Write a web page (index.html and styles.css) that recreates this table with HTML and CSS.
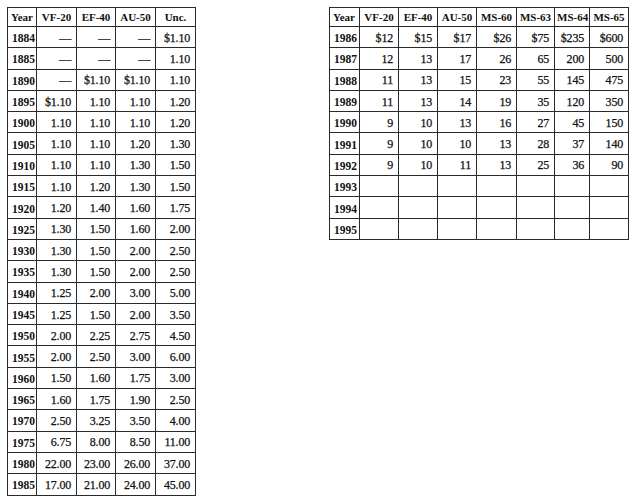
FILE: index.html
```html
<!DOCTYPE html>
<html>
<head>
<meta charset="utf-8">
<link rel="stylesheet" href="styles.css">
</head>
<body>
<div class="page">
  <table class="grid left">
    <colgroup>
      <col class="c-year"><col class="c-a"><col class="c-b"><col class="c-c"><col class="c-d">
    </colgroup>
    <thead>
      <tr><th class="yh">Year</th><th>VF-20</th><th>EF-40</th><th>AU-50</th><th>Unc.</th></tr>
    </thead>
    <tbody>
      <tr><th>1884</th><td>—</td><td>—</td><td>—</td><td>$1.10</td></tr>
      <tr><th>1885</th><td>—</td><td>—</td><td>—</td><td>1.10</td></tr>
      <tr><th>1890</th><td>—</td><td>$1.10</td><td>$1.10</td><td>1.10</td></tr>
      <tr><th>1895</th><td>$1.10</td><td>1.10</td><td>1.10</td><td>1.20</td></tr>
      <tr><th>1900</th><td>1.10</td><td>1.10</td><td>1.10</td><td>1.20</td></tr>
      <tr><th>1905</th><td>1.10</td><td>1.10</td><td>1.20</td><td>1.30</td></tr>
      <tr><th>1910</th><td>1.10</td><td>1.10</td><td>1.30</td><td>1.50</td></tr>
      <tr><th>1915</th><td>1.10</td><td>1.20</td><td>1.30</td><td>1.50</td></tr>
      <tr><th>1920</th><td>1.20</td><td>1.40</td><td>1.60</td><td>1.75</td></tr>
      <tr><th>1925</th><td>1.30</td><td>1.50</td><td>1.60</td><td>2.00</td></tr>
      <tr><th>1930</th><td>1.30</td><td>1.50</td><td>2.00</td><td>2.50</td></tr>
      <tr><th>1935</th><td>1.30</td><td>1.50</td><td>2.00</td><td>2.50</td></tr>
      <tr><th>1940</th><td>1.25</td><td>2.00</td><td>3.00</td><td>5.00</td></tr>
      <tr><th>1945</th><td>1.25</td><td>1.50</td><td>2.00</td><td>3.50</td></tr>
      <tr><th>1950</th><td>2.00</td><td>2.25</td><td>2.75</td><td>4.50</td></tr>
      <tr><th>1955</th><td>2.00</td><td>2.50</td><td>3.00</td><td>6.00</td></tr>
      <tr><th>1960</th><td>1.50</td><td>1.60</td><td>1.75</td><td>3.00</td></tr>
      <tr><th>1965</th><td>1.60</td><td>1.75</td><td>1.90</td><td>2.50</td></tr>
      <tr><th>1970</th><td>2.50</td><td>3.25</td><td>3.50</td><td>4.00</td></tr>
      <tr><th>1975</th><td>6.75</td><td>8.00</td><td>8.50</td><td>11.00</td></tr>
      <tr><th>1980</th><td>22.00</td><td>23.00</td><td>26.00</td><td>37.00</td></tr>
      <tr><th>1985</th><td>17.00</td><td>21.00</td><td>24.00</td><td>45.00</td></tr>
    </tbody>
  </table>

  <table class="grid right">
    <colgroup>
      <col class="r-year"><col class="r-1"><col class="r-2"><col class="r-3"><col class="r-4"><col class="r-5"><col class="r-6"><col class="r-7">
    </colgroup>
    <thead>
      <tr><th class="yh">Year</th><th>VF-20</th><th>EF-40</th><th>AU-50</th><th>MS-60</th><th>MS-63</th><th>MS-64</th><th>MS-65</th></tr>
    </thead>
    <tbody>
      <tr><th>1986</th><td>$12</td><td>$15</td><td>$17</td><td>$26</td><td>$75</td><td>$235</td><td>$600</td></tr>
      <tr><th>1987</th><td>12</td><td>13</td><td>17</td><td>26</td><td>65</td><td>200</td><td>500</td></tr>
      <tr><th>1988</th><td>11</td><td>13</td><td>15</td><td>23</td><td>55</td><td>145</td><td>475</td></tr>
      <tr><th>1989</th><td>11</td><td>13</td><td>14</td><td>19</td><td>35</td><td>120</td><td>350</td></tr>
      <tr><th>1990</th><td>9</td><td>10</td><td>13</td><td>16</td><td>27</td><td>45</td><td>150</td></tr>
      <tr><th>1991</th><td>9</td><td>10</td><td>10</td><td>13</td><td>28</td><td>37</td><td>140</td></tr>
      <tr><th>1992</th><td>9</td><td>10</td><td>11</td><td>13</td><td>25</td><td>36</td><td>90</td></tr>
      <tr><th>1993</th><td></td><td></td><td></td><td></td><td></td><td></td><td></td></tr>
      <tr><th>1994</th><td></td><td></td><td></td><td></td><td></td><td></td><td></td></tr>
      <tr><th>1995</th><td></td><td></td><td></td><td></td><td></td><td></td><td></td></tr>
    </tbody>
  </table>
</div>
</body>
</html>
```

FILE: styles.css
```css
html, body {
  margin: 0;
  padding: 0;
  background: #ffffff;
}

.page {
  display: flex;
  align-items: flex-start;
  gap: 133px;
  padding: 7px 0 0 7px;
  font-family: "Liberation Serif", "Times New Roman", serif;
  color: #111111;
}

.grid {
  border-collapse: collapse;
  table-layout: fixed;
  border: 1px solid #1e1e1e;
}

.grid th,
.grid td {
  border: 1px solid #2a2a2a;
  padding: 0 4px;
  white-space: nowrap;
  overflow: hidden;
}

.grid thead th {
  height: 18px;
  font-size: 11px;
  font-weight: bold;
  text-align: center;
  padding: 0 2px;
}

.grid thead th.yh {
  text-align: left;
  padding-left: 3px;
}

.grid tbody tr {
  height: 21.3px;
}

.grid tbody th {
  font-size: 11.5px;
  font-weight: bold;
  text-align: left;
  padding-left: 4px;
  padding-top: 2px;
}

.grid tbody td {
  font-size: 12px;
  text-align: right;
  padding-right: 5px;
  padding-top: 2px;
  -webkit-text-stroke: 0.25px #111111;
  letter-spacing: -0.2px;
}

.left { width: 189px; }
.c-year { width: 29px; }
.c-a { width: 40px; }
.c-b { width: 39px; }
.c-c { width: 40px; }
.c-d { width: 40px; }

.right { width: 300px; }
.r-year { width: 30px; }
.r-1 { width: 39px; }
.r-2 { width: 39px; }
.r-3 { width: 39px; }
.r-4 { width: 40px; }
.r-5 { width: 38px; }
.r-6 { width: 35px; }
.r-7 { width: 39px; }
```
